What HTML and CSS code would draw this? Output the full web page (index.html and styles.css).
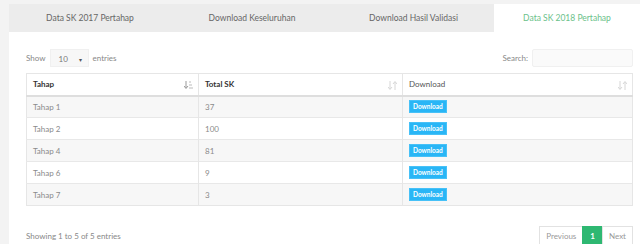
FILE: index.html
```html
<!DOCTYPE html>
<html lang="id">
<head>
  <meta charset="UTF-8" />
  <title>Data SK 2018 Pertahap</title>
  <link rel="stylesheet" href="styles.css">
</head>
<body>
  <div class="panel">
    <ul class="tabs">
      <li class="tab">Data SK 2017 Pertahap</li>
      <li class="tab">Download Keseluruhan</li>
      <li class="tab">Download Hasil Validasi</li>
      <li class="tab active">Data SK 2018 Pertahap</li>
    </ul>

    <div class="tab-body">
      <div class="dt-top">
        <label class="length">Show
          <span class="select">10 <span class="caret">&#9662;</span></span>
          entries</label>
        <label class="search">Search: <span class="input"></span></label>
      </div>

      <table class="dt">
        <thead>
          <tr>
            <th class="c1">Tahap
              <svg class="sort on" width="9" height="9" viewBox="0 0 9 9"><path d="M2 0v7M0 5l2 2.5L4 5" fill="none" stroke="#9a9a9a" stroke-width="1"/><path d="M5 1h2M5 4h3M5 7h4" stroke="#bbb" stroke-width="1.2"/></svg>
            </th>
            <th class="c2">Total SK
              <svg class="sort" width="9" height="9" viewBox="0 0 9 9"><path d="M2 0v8M0 6l2 2.5L4 6M7 9V1M5 3l2-2.5L9 3" fill="none" stroke="#d6d6d6" stroke-width="1"/></svg>
            </th>
            <th class="c3 light">Download
              <svg class="sort" width="9" height="9" viewBox="0 0 9 9"><path d="M2 0v8M0 6l2 2.5L4 6M7 9V1M5 3l2-2.5L9 3" fill="none" stroke="#d6d6d6" stroke-width="1"/></svg>
            </th>
          </tr>
        </thead>
        <tbody id="rows"></tbody>
      </table>

      <div class="dt-bottom">
        <span class="info">Showing 1 to 5 of 5 entries</span>
        <ul class="pager">
          <li>Previous</li>
          <li class="current">1</li>
          <li>Next</li>
        </ul>
      </div>
    </div>
  </div>

  <script>
    const rows = [['Tahap 1', 37], ['Tahap 2', 100], ['Tahap 4', 81], ['Tahap 6', 9], ['Tahap 7', 3]];
    const tbody = document.getElementById('rows');
    rows.forEach(([tahap, total]) => {
      const tr = document.createElement('tr');
      tr.innerHTML = `<td>${tahap}</td><td>${total}</td><td><span class="btn-dl">Download</span></td>`;
      tbody.appendChild(tr);
    });
  </script>
</body>
</html>
```

FILE: styles.css
```css
*, *::before, *::after {
  box-sizing: border-box;
}
body {
  margin: 0;
  padding: 4px 0 0 9px;
  background: #f3f3f3;
  font-family: 'Lato', 'Noto Sans', sans-serif;
  font-size: 8px;
  color: #888;
  overflow: hidden;
  height: 244px;
}
.panel {
  background: #fff;
  height: 240px;
  overflow: hidden;
}
.tabs {
  display: flex;
  margin: 0;
  padding: 0;
  list-style: none;
  background: #ececec;
  height: 28px;
}
.tab {
  width: 162px;
  flex: none;
  display: flex;
  align-items: center;
  justify-content: center;
  color: #666;
  font-size: 8.5px;
}
.tab:nth-child(3) {
  width: 161px;
}
.tab.active {
  background: #fff;
  color: #6ac18a;
  flex: 1;
}
.tab-body {
  padding: 17px 7px 0 17px;
}
.dt-top {
  display: flex;
  justify-content: space-between;
  align-items: center;
  height: 18px;
  margin-bottom: 6px;
}
.length, .search {
  display: flex;
  align-items: center;
  gap: 4px;
  color: #888;
}
.select {
  width: 39px;
  height: 18px;
  background: #f7f7f7;
  border: 1px solid #f0f0f0;
  display: flex;
  align-items: center;
  justify-content: space-between;
  padding: 2px 6px 0 8px;
  color: #777;
}
.caret {
  font-size: 6px;
  color: #555;
}
.input {
  width: 101px;
  height: 18px;
  background: #fafafa;
  border: 1px solid #f0f0f0;
  border-radius: 2px;
}
.dt {
  width: 607px;
  border-collapse: collapse;
  border: 1px solid #e6e6e6;
}
.dt th {
  height: 22px;
  text-align: left;
  font-weight: 700;
  color: #333;
  padding: 0 6px;
  border-right: 1px solid #e6e6e6;
  border-bottom: 2px solid #dedede;
  position: relative;
}
.dt th.light {
  font-weight: 400;
  color: #555;
}
.dt .c1 { width: 172px; }
.dt .c2 { width: 204px; }
.sort {
  position: absolute;
  right: 5px;
  top: 7px;
}
.dt td {
  height: 22px;
  padding: 0 6px;
  border-right: 1px solid #e6e6e6;
  border-top: 1px solid #e8e8e8;
  color: #8a8a8a;
}
.dt tbody tr:nth-child(odd) {
  background: #f7f7f7;
}
.btn-dl {
  display: inline-block;
  background: #29b6f6;
  color: #fff;
  font-size: 6.5px;
  font-weight: 700;
  padding: 2px 3px;
  border: 1px solid #47c1f7;
  line-height: 7px;
}
.dt-bottom {
  display: flex;
  justify-content: space-between;
  align-items: center;
  margin-top: 20px;
}
.info {
  color: #888;
}
.pager {
  display: flex;
  list-style: none;
  margin: 0;
  padding: 0;
}
.pager li {
  height: 20px;
  display: flex;
  align-items: center;
  padding: 0 6px;
  border: 1px solid #e2e2e2;
  margin-left: -1px;
  color: #999;
}
.pager li.current {
  background: #2eb872;
  border-color: #2eb872;
  color: #fff;
  font-weight: 700;
  padding: 0 7px;
}
```
